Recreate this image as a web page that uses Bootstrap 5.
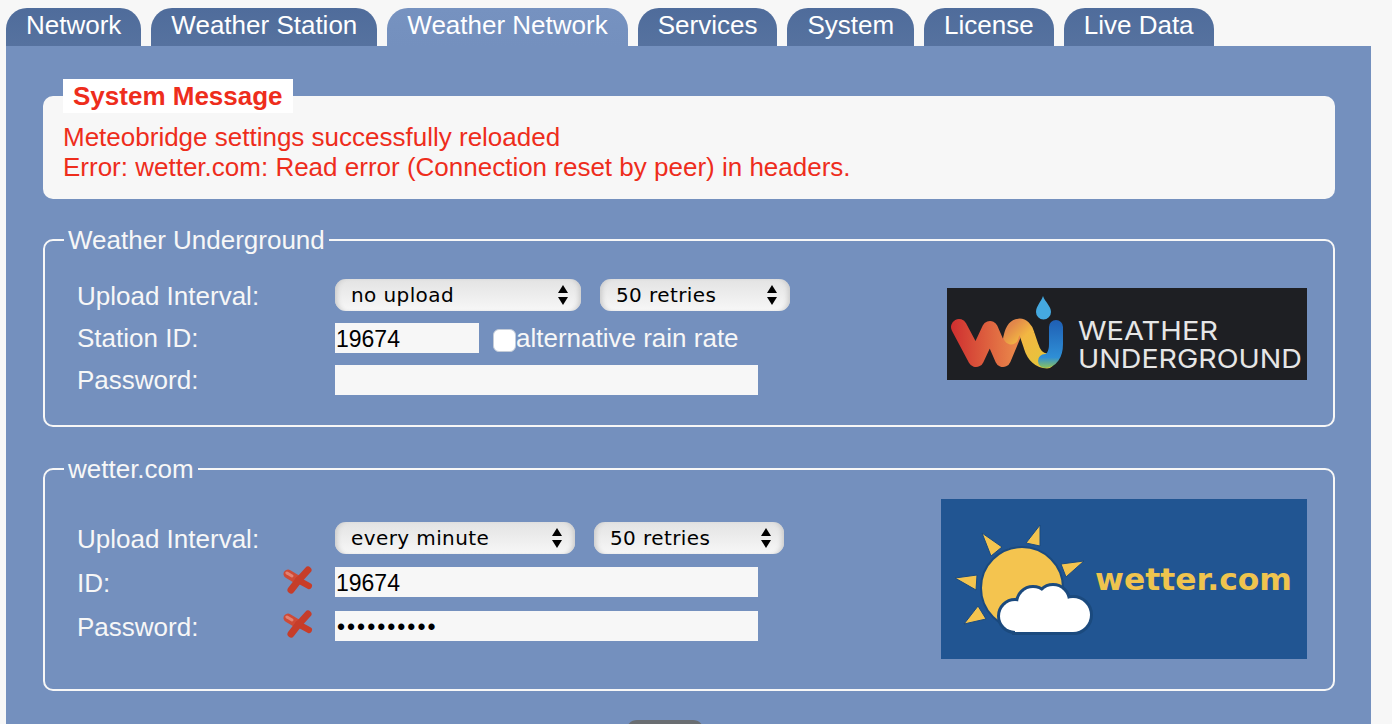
<!DOCTYPE html>
<html lang="en">
<head>
<meta charset="utf-8">
<title>Meteobridge</title>
<link href="https://cdn.jsdelivr.net/npm/bootstrap@5.3.0/dist/css/bootstrap.min.css" rel="stylesheet">
<style>
html,body{height:724px;overflow:hidden;}
body{background:#f7f7f7;font-family:"Liberation Sans",Arial,sans-serif;font-size:26px;color:#f7f7f7;padding:8px 21px 0 6px;}
.tabbar{gap:10px;height:38px;}
.tabbar .nav-link{height:38px;padding:0 20px;line-height:35px;color:#fff;font-size:26px;border-radius:21px 21px 0 0;background:linear-gradient(#4f6c9b,#56729f);}
.tabbar .nav-link.active{background:linear-gradient(#7692c0,#7490be);}
.mainpanel{background:#7490be;height:678px;padding:33px 36px 0 37px;overflow:hidden;}
.msgtitle{display:block;width:fit-content;margin:0 0 0 20px;height:34px;line-height:34px;padding:0 10px;background:#fff;color:#ee2d1c;font-weight:700;position:relative;}
.msgbox{background:#f7f7f7;border-radius:10px;margin-top:-17px;padding:26px 20px 17px;line-height:30px;color:#ee2d1c;}
.fset{border:2px solid #f7f7f7;border-radius:10px;margin:26px 0 0;padding:0 26px 0 0;}
.fset legend{float:none;width:auto;font-size:26px;line-height:30px;margin:0 0 0 19px;padding:0 4px;color:#f7f7f7;}
.fset.second{margin-top:27px;}
.rows-a{padding:20px 0 24px 32px;}
.rows-b{padding:33px 0 40px 32px;}
.rows-a .frow{height:42px;}
.rows-b .frow{height:44px;}
.rows-b .tinput{margin-top:-2px;}
.flabel{width:258px;flex:none;position:relative;}
.xmark{position:absolute;left:205px;top:50%;margin-top:-17px;}
.tinput{height:30px;border:0;border-radius:0;background:#f7f7f7;color:#000;font-family:"Liberation Sans",Arial,sans-serif;font-size:23px;padding:2px 1px 0;outline:0;}
.w144{width:144px;}
.w423{width:423px;}
.dots{letter-spacing:2px;padding-left:2px;}
.selwrap{position:relative;height:32px;margin-top:-2px;}
.pick{appearance:none;-webkit-appearance:none;display:block;height:32px;width:100%;border:0;border-radius:11px;padding:0 30px 0 16px;font-family:"DejaVu Sans",sans-serif;font-size:20px;letter-spacing:.4px;color:#000;background:linear-gradient(#e3e3e3,#f7f7f7);box-shadow:inset 5px 0 5px -3px #c9c9c9,inset -5px 0 5px -3px #c9c9c9;}
.updown{position:absolute;right:13px;top:6px;pointer-events:none;}
.w246{width:246px;}.w240{width:240px;}.w190{width:190px;}
.mr19{margin-right:19px;}
.tick{appearance:none;-webkit-appearance:none;width:23px;height:23px;margin:4px 0 0 14px;background:#fff;border:1px solid #c4ccd8;border-radius:6px;flex:none;}
.logoa{display:block;margin-top:33px;}
.logob{display:block;margin-top:15px;}
.savebtn{display:block;width:78px;height:40px;margin:29px 0 0 583px;border:4px solid #6a6e72;border-radius:11px;background:#f7f7f7;padding:0;}
</style>
</head>
<body>
<svg width="0" height="0" class="d-block" aria-hidden="true">
  <defs>
    <g id="redx">
      <path d="M6 8L16 14" fill="none" stroke="#cf4a36" stroke-width="9" stroke-linecap="round"/>
      <path d="M16 14L27 20" fill="none" stroke="#c93c28" stroke-width="6" stroke-linecap="round"/>
      <path d="M26 4L16 15L9 24" fill="none" stroke="#c63d2a" stroke-width="7" stroke-linecap="round" stroke-linejoin="round"/>
      <path d="M5 7L10 10" fill="none" stroke="#f0a89c" stroke-opacity=".6" stroke-width="3" stroke-linecap="round"/>
    </g>
  </defs>
</svg>
<ul class="nav tabbar flex-nowrap">
<li class="nav-item"><a class="nav-link" href="#">Network</a></li>
<li class="nav-item"><a class="nav-link" href="#">Weather Station</a></li>
<li class="nav-item"><a class="nav-link active" href="#">Weather Network</a></li>
<li class="nav-item"><a class="nav-link" href="#">Services</a></li>
<li class="nav-item"><a class="nav-link" href="#">System</a></li>
<li class="nav-item"><a class="nav-link" href="#">License</a></li>
<li class="nav-item"><a class="nav-link" href="#">Live Data</a></li>
</ul>
<div class="mainpanel">
  <div class="msgtitle">System Message</div>
  <div class="msgbox">Meteobridge settings successfully reloaded<br>Error: wetter.com: Read error (Connection reset by peer) in headers.</div>

  <fieldset class="fset">
    <legend>Weather Underground</legend>
    <div class="d-flex justify-content-between align-items-start">
      <div class="rows-a">
        <div class="frow d-flex align-items-center">
          <label class="flabel">Upload Interval:</label>
          <div class="selwrap w246 mr19"><select class="pick"><option>no upload</option></select>
            <svg class="updown" width="10" height="20" viewBox="0 0 10 20"><path d="M5 0L10 8H0zM5 20L0 12H10z" fill="#000"/></svg></div>
          <div class="selwrap w190"><select class="pick"><option>50 retries</option></select>
            <svg class="updown" width="10" height="20" viewBox="0 0 10 20"><path d="M5 0L10 8H0zM5 20L0 12H10z" fill="#000"/></svg></div>
        </div>
        <div class="frow d-flex align-items-center">
          <label class="flabel">Station ID:</label>
          <input class="tinput w144" type="text" value="19674">
          <input class="tick" type="checkbox" id="altrain">
          <label for="altrain">alternative rain rate</label>
        </div>
        <div class="frow d-flex align-items-center">
          <label class="flabel">Password:</label>
          <input class="tinput w423" type="password" value="">
        </div>
      </div>
      <svg class="logoa" width="360" height="92" viewBox="0 0 360 92" role="img" aria-label="Weather Underground">
        <defs>
          <linearGradient id="wured" gradientUnits="userSpaceOnUse" x1="5" x2="68" y1="0" y2="0"><stop offset="0" stop-color="#cf3030"/><stop offset="1" stop-color="#e9864a"/></linearGradient>
          <linearGradient id="wuyel" gradientUnits="userSpaceOnUse" x1="62" x2="92" y1="40" y2="70"><stop offset="0" stop-color="#e2874a"/><stop offset=".4" stop-color="#f2b742"/><stop offset="1" stop-color="#e9c23c"/></linearGradient>
          <linearGradient id="wublu" gradientUnits="userSpaceOnUse" x1="0" x2="0" y1="32" y2="80"><stop offset="0" stop-color="#1f5fb4"/><stop offset=".78" stop-color="#2f8fd6"/><stop offset="1" stop-color="#8cc25c"/></linearGradient>
        </defs>
        <rect width="360" height="92" fill="#1e1f23"/>
        <path d="M96 8C94 14 89 18 89 24a7.500 7.500 0 0 0 15 0C104 18 98 14 96 8z" fill="#45a9e0"/>
        <path d="M12 39L29 71L43 41L56 71L66 47" fill="none" stroke="url(#wured)" stroke-width="16" stroke-linecap="round" stroke-linejoin="round"/>
        <path d="M64 49C67 35 77 35 80 46L84 58C87 68 93 73 100 73" fill="none" stroke="url(#wuyel)" stroke-width="15" stroke-linecap="round"/>
        <path d="M109 39V56C109 67 104 73 98 73" fill="none" stroke="url(#wublu)" stroke-width="14" stroke-linecap="round"/>
        <text x="131" y="52" font-family="Inter,Lato,sans-serif" font-size="26" fill="#e6e6e6" textLength="140" lengthAdjust="spacingAndGlyphs">WEATHER</text>
        <text x="131" y="80" font-family="Inter,Lato,sans-serif" font-size="26" fill="#e6e6e6" textLength="224" lengthAdjust="spacingAndGlyphs">UNDERGROUND</text>
      </svg>
    </div>
  </fieldset>

  <fieldset class="fset second">
    <legend>wetter.com</legend>
    <div class="d-flex justify-content-between align-items-start">
      <div class="rows-b">
        <div class="frow d-flex align-items-center">
          <label class="flabel">Upload Interval:</label>
          <div class="selwrap w240 mr19"><select class="pick"><option>every minute</option></select>
            <svg class="updown" width="10" height="20" viewBox="0 0 10 20"><path d="M5 0L10 8H0zM5 20L0 12H10z" fill="#000"/></svg></div>
          <div class="selwrap w190"><select class="pick"><option>50 retries</option></select>
            <svg class="updown" width="10" height="20" viewBox="0 0 10 20"><path d="M5 0L10 8H0zM5 20L0 12H10z" fill="#000"/></svg></div>
        </div>
        <div class="frow d-flex align-items-center">
          <label class="flabel">ID:
            <svg class="xmark" width="32" height="30" viewBox="0 0 32 30"><use href="#redx"/></svg></label>
          <input class="tinput w423" type="text" value="19674">
        </div>
        <div class="frow d-flex align-items-center">
          <label class="flabel">Password:
            <svg class="xmark" width="32" height="30" viewBox="0 0 32 30"><use href="#redx"/></svg></label>
          <input class="tinput w423 dots" type="password" value="1234567890">
        </div>
      </div>
      <svg class="logob" width="366" height="160" viewBox="0 0 366 160" role="img" aria-label="wetter.com">
        <rect width="366" height="160" fill="#215592"/>
        <g fill="#f4c44f" stroke="#1b4a7e" stroke-width="1" stroke-linejoin="round">
          <path d="M99 26L85 44L99 47z"/><path d="M41 34L50 57L61 48z"/><path d="M143 62L120 65L125 78z"/><path d="M14 79L36 76L35 91z"/><path d="M23 125L45 120L37 107z"/>
          <circle cx="81" cy="89" r="41" stroke-width="2"/>
        </g>
        <g fill="#1b4a7e" stroke="#1b4a7e" stroke-width="6">
          <circle cx="74" cy="117" r="15"/><circle cx="92" cy="104" r="15"/><circle cx="112" cy="102" r="15"/><circle cx="132" cy="116" r="17"/><rect x="74" y="112" width="58" height="21"/>
        </g>
        <g fill="#fff">
          <circle cx="74" cy="117" r="15"/><circle cx="92" cy="104" r="15"/><circle cx="112" cy="102" r="15"/><circle cx="132" cy="116" r="17"/><rect x="74" y="112" width="58" height="21"/>
        </g>
        <text x="154" y="91" font-family="'DejaVu Sans',sans-serif" font-weight="700" font-size="31" fill="#efc44e" textLength="197" lengthAdjust="spacingAndGlyphs">wetter.com</text>
      </svg>
    </div>
  </fieldset>
  <button class="savebtn" type="button" aria-label="Save"></button>
</div>
</body>
</html>
